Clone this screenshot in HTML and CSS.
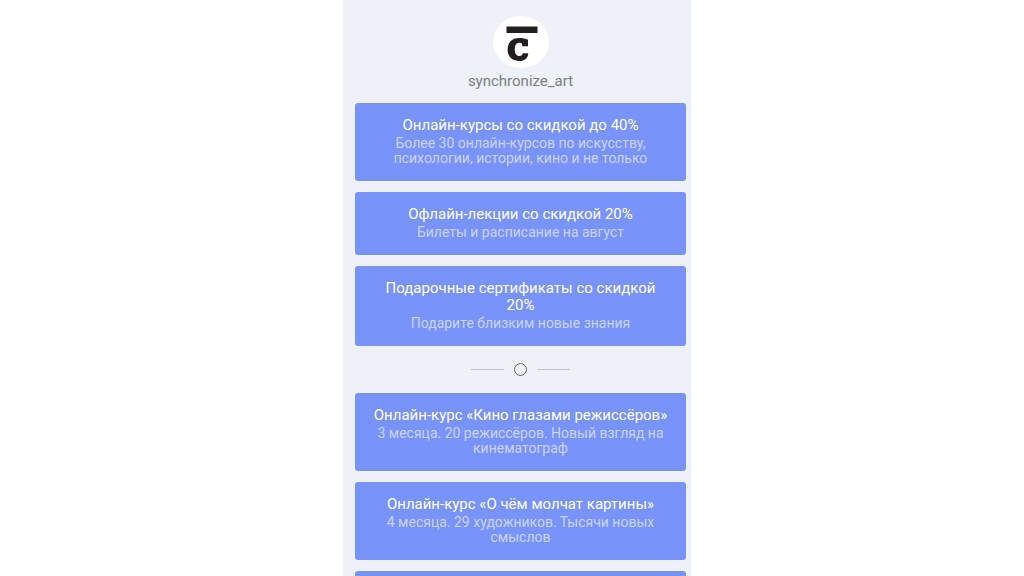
FILE: index.html
```html
<!DOCTYPE html>
<html lang="ru">
<head>
<meta charset="utf-8">
<meta name="viewport" content="width=device-width, initial-scale=1">
<title>synchronize_art</title>
<link rel="stylesheet" href="styles.css">
</head>
<body>
<main class="page">
  <header class="profile">
    <svg class="avatar" viewBox="0 0 56 52" aria-hidden="true">
      <ellipse cx="28" cy="26" rx="28" ry="26" fill="#fff"/>
      <path d="M13.500 10.500H44.500V17H13.500Z" fill="#231f20"/>
      <path d="M35 23.800V30.200H29.500L28.800 27.400C28.200 27 27.500 26.800 26.600 26.800C23.200 26.800 21.800 29.400 21.800 33.500C21.800 37.800 23.400 40 26.500 40C28.600 40 29.500 39 29.600 37.200H35.200C35.200 42 31.700 45 26.200 45C19 45 14.600 40.800 14.600 33.600C14.600 26.600 19 22 26 22C29.500 22 32.800 22.600 35 23.800Z" fill="#231f20"/>
    </svg>
    <h1 class="name">synchronize_art</h1>
  </header>
  <nav class="links">
    <a class="card" href="#courses">
      <span class="title">Онлайн-курсы со скидкой до 40%</span>
      <span class="text">Более 30 онлайн-курсов по искусству, психологии, истории, кино и не только</span>
    </a>
    <a class="card" href="#lectures">
      <span class="title">Офлайн-лекции со скидкой 20%</span>
      <span class="text">Билеты и расписание на август</span>
    </a>
    <a class="card" href="#gifts">
      <span class="title">Подарочные сертификаты со скидкой 20%</span>
      <span class="text">Подарите близким новые знания</span>
    </a>
    <div class="divider" role="separator">
      <span class="line"></span>
      <span class="ring"></span>
      <span class="line"></span>
    </div>
    <a class="card" href="#cinema">
      <span class="title">Онлайн-курс «Кино глазами режиссёров»</span>
      <span class="text">3 месяца. 20 режиссёров. Новый взгляд на кинематограф</span>
    </a>
    <a class="card" href="#paintings">
      <span class="title">Онлайн-курс «О чём молчат картины»</span>
      <span class="text">4 месяца. 29 художников. Тысячи новых смыслов</span>
    </a>
    <div class="card"></div>
  </nav>
</main>
</body>
</html>
```

FILE: styles.css
```css
* {
  box-sizing: border-box;
}

body {
  margin: 0;
  height: 100vh;
  padding-left: 10px;
  overflow: hidden;
  background: #fff;
  font-family: Roboto, "Liberation Sans", sans-serif;
}

.page {
  width: 100%;
  max-width: 348px;
  min-height: 100vh;
  margin: 0 auto;
  padding: 16px 5px 0 12px;
  background: #eef1f7;
}

.profile {
  display: flex;
  flex-direction: column;
  align-items: center;
  gap: 4px;
  margin-bottom: 13px;
}

.avatar {
  width: 56px;
  height: 52px;
}

.name {
  margin: 0;
  color: #7b7d82;
  font-size: 15px;
  font-weight: 400;
  line-height: 18px;
}

.links {
  display: flex;
  flex-direction: column;
  gap: 11px;
}

.card {
  display: flex;
  flex-direction: column;
  gap: 2px;
  padding: 14px 15px 15px;
  border-radius: 3px;
  background: #7893f9;
  text-align: center;
  text-decoration: none;
}

.title {
  color: #fff;
  font-size: 15px;
  line-height: 17px;
}

.text {
  color: #c9d4fd;
  font-size: 14px;
  line-height: 15px;
}

.divider {
  display: flex;
  align-items: center;
  justify-content: center;
  gap: 10px;
  padding: 6px 0;
}

.line {
  width: 33px;
  height: 1px;
  background: #bfc2c8;
}

.ring {
  width: 13px;
  height: 13px;
  border: 1px solid #65676b;
  border-radius: 50%;
}
```
